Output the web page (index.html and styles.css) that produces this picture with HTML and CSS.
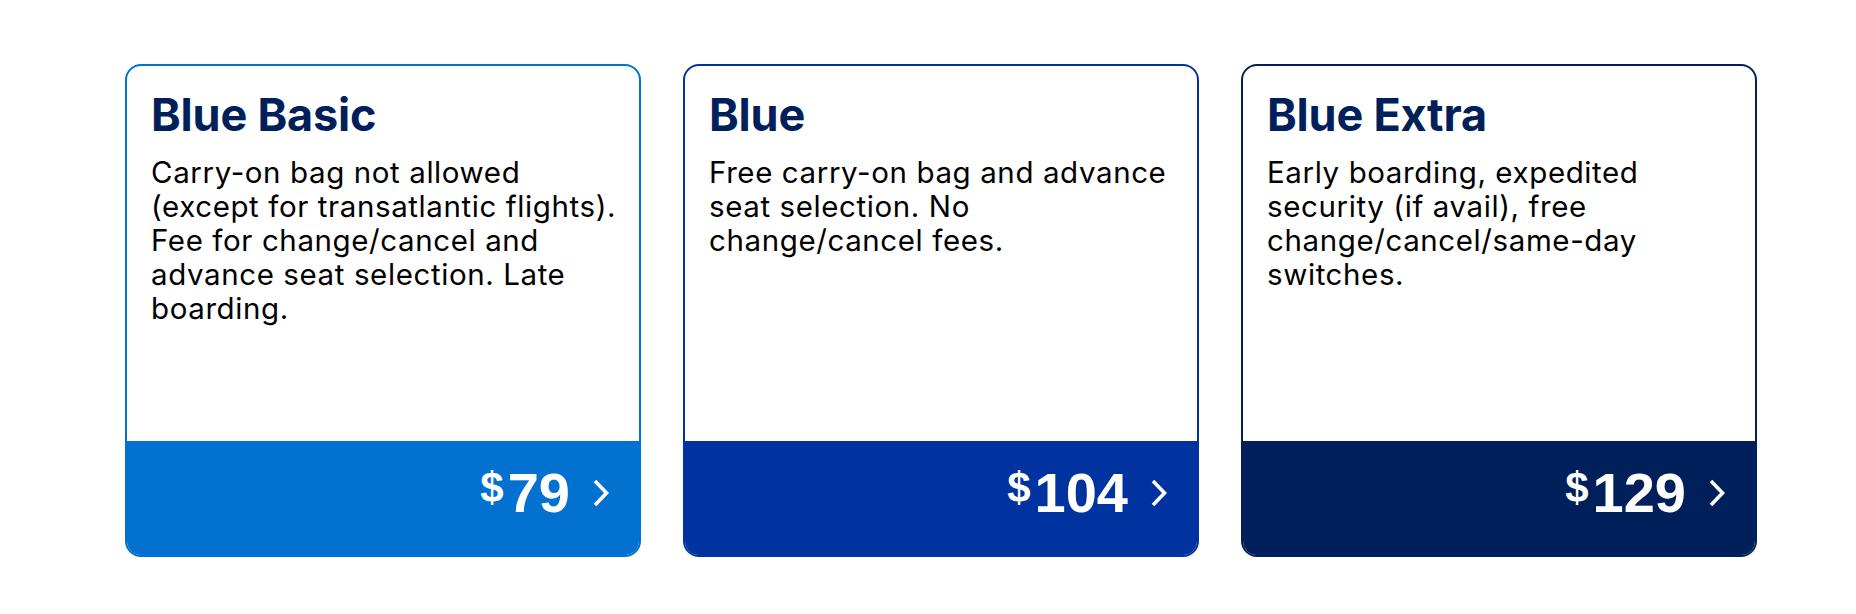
FILE: index.html
```html
<!DOCTYPE html>
<html lang="en">
<head>
<meta charset="utf-8">
<title>Fares</title>
<link rel="stylesheet" href="styles.css">
</head>
<body>
<div class="fares">
  <div class="card card-basic">
    <div class="card-body">
      <h2 class="card-title">Blue Basic</h2>
      <p class="card-text">Carry-on bag not allowed (except for transatlantic flights). Fee for change/cancel and advance seat selection. Late boarding.</p>
    </div>
    <div class="card-price">
      <span class="cur">$</span><span class="amt">79</span>
      <svg class="chev" width="18" height="30" viewBox="0 0 18 30"><polyline points="3,3 14.5,15 3,27" fill="none" stroke="#fff" stroke-width="3.6" stroke-linejoin="miter"/></svg>
    </div>
  </div>
  <div class="card card-blue">
    <div class="card-body">
      <h2 class="card-title">Blue</h2>
      <p class="card-text">Free carry-on bag and advance seat selection. No change/cancel fees.</p>
    </div>
    <div class="card-price">
      <span class="cur">$</span><span class="amt">104</span>
      <svg class="chev" width="18" height="30" viewBox="0 0 18 30"><polyline points="3,3 14.5,15 3,27" fill="none" stroke="#fff" stroke-width="3.6" stroke-linejoin="miter"/></svg>
    </div>
  </div>
  <div class="card card-extra">
    <div class="card-body">
      <h2 class="card-title">Blue Extra</h2>
      <p class="card-text">Early boarding, expedited security (if avail), free change/cancel/same-day switches.</p>
    </div>
    <div class="card-price">
      <span class="cur">$</span><span class="amt">129</span>
      <svg class="chev" width="18" height="30" viewBox="0 0 18 30"><polyline points="3,3 14.5,15 3,27" fill="none" stroke="#fff" stroke-width="3.6" stroke-linejoin="miter"/></svg>
    </div>
  </div>
</div>
</body>
</html>
```
FILE: styles.css
```css
html, body {
  margin: 0;
  padding: 0;
  background: #ffffff;
}

body {
  font-family: Inter, "Noto Sans", sans-serif;
}

.fares {
  display: flex;
  gap: 42px;
  padding: 64px 0 0 125px;
}

.card {
  box-sizing: border-box;
  width: 516px;
  height: 493px;
  border: 2px solid #0070cf;
  border-radius: 16px;
  overflow: hidden;
  background: #ffffff;
  display: flex;
  flex-direction: column;
}

.card-basic { border-color: #0271cf; }
.card-blue { border-color: #0033a0; }
.card-extra { border-color: #00205b; }

.card-basic .card-price { background: #0271cf; }
.card-blue .card-price { background: #0033a0; }
.card-extra .card-price { background: #00205b; }

.card-body {
  flex: 1;
  padding: 22px 18px 0 24px;
}

.card-title {
  margin: 0;
  font-size: 45px;
  line-height: 54px;
  font-weight: 700;
  color: #00205b;
  letter-spacing: -0.2px;
}

.card-text {
  margin: 13px 0 0 0;
  font-size: 29.5px;
  line-height: 34px;
  font-weight: 400;
  letter-spacing: 0.6px;
  color: #000000;
}

.card-price {
  height: 114px;
  box-sizing: border-box;
  padding: 24px 29px 0 0;
  display: flex;
  justify-content: flex-end;
  align-items: flex-start;
  color: #ffffff;
  font-family: "Liberation Sans", Arial, sans-serif;
  font-weight: 700;
}

.cur {
  font-size: 42px;
  line-height: 1;
  margin: 2px 4px 0 0;
}

.amt {
  font-size: 56px;
  line-height: 1;
}

.chev {
  display: block;
  margin: 13px 0 0 22px;
}
```
